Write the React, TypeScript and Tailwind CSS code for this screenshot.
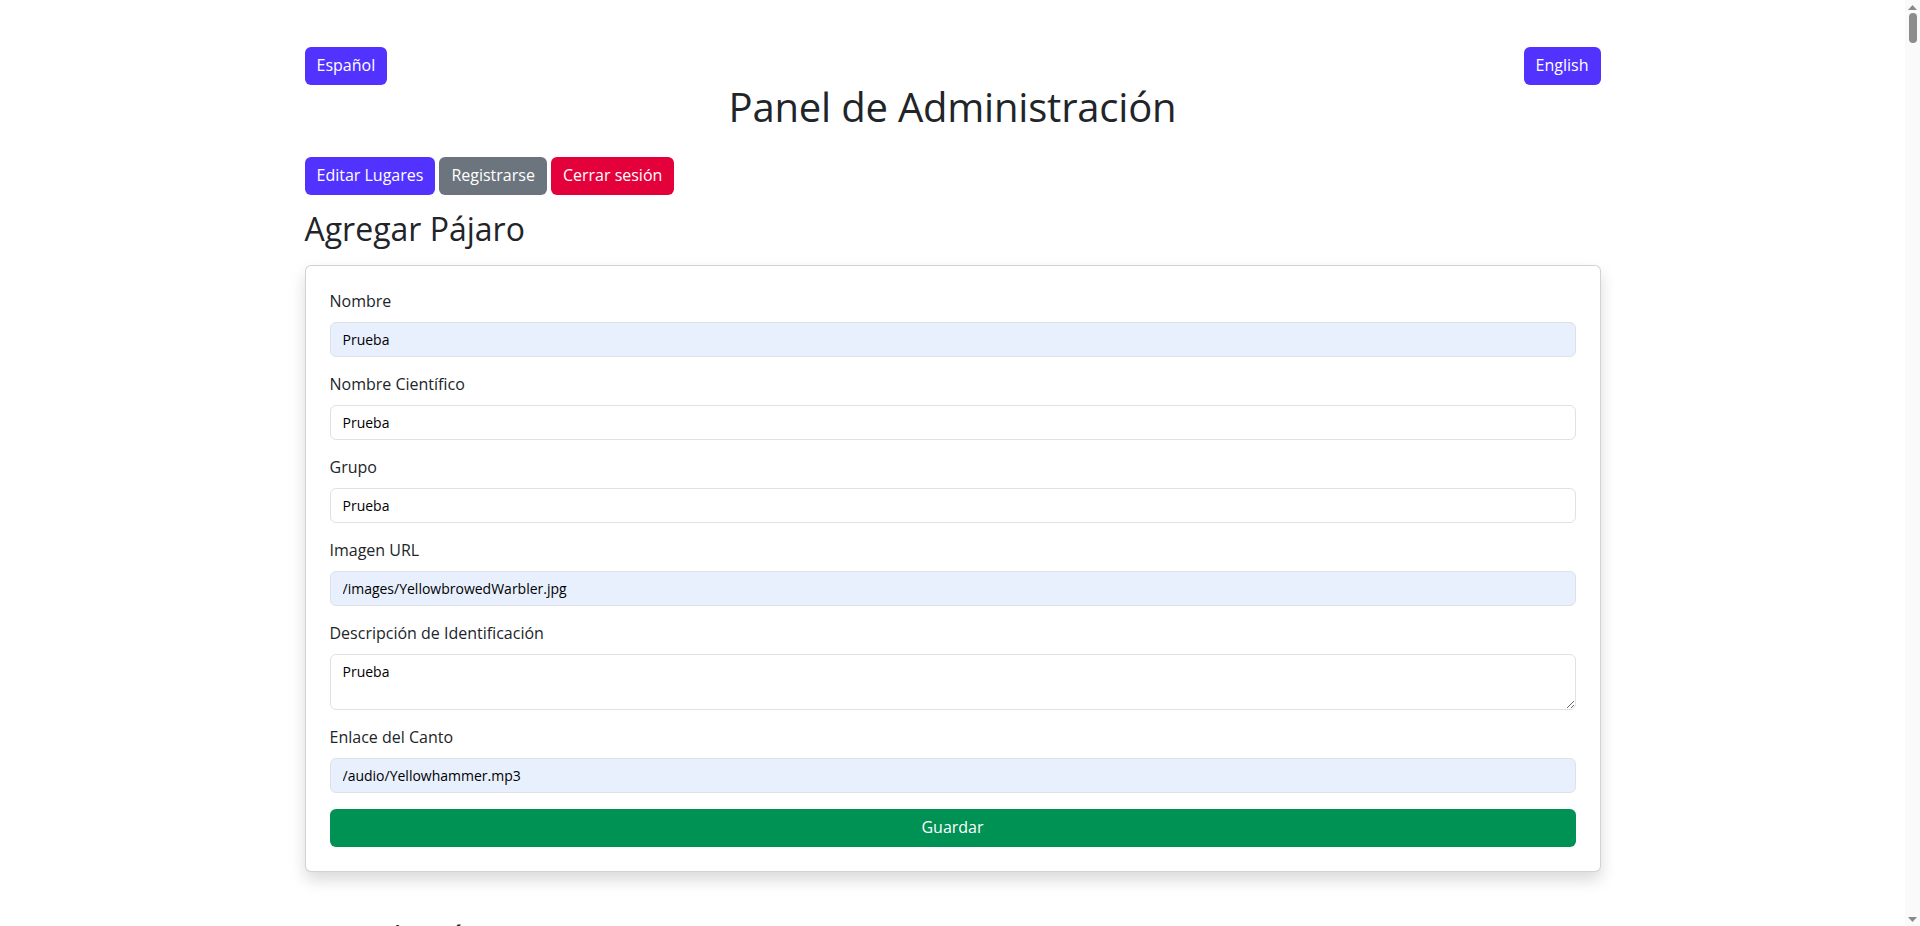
import React from "react";

const fieldsTop = [
  { label: "Nombre", value: "Prueba", autofill: true },
  { label: "Nombre Científico", value: "Prueba", autofill: false },
  { label: "Grupo", value: "Prueba", autofill: false },
  { label: "Imagen URL", value: "/images/YellowbrowedWarbler.jpg", autofill: true },
];

function Field({ label, value, autofill }: { label: string; value: string; autofill: boolean }) {
  return (
    <div className="mb-4">
      <label className="block mb-[10px] text-[16px] leading-[22px] text-[#212529]">{label}</label>
      <input
        readOnly
        value={value}
        className={
          "block w-full h-[35px] px-3 py-[6px] text-[14px] leading-[21px] text-black border border-[#dee2e6] rounded-md outline-none " +
          (autofill ? "bg-[#e8f0fe]" : "bg-white")
        }
        style={{ fontFamily: "'Open Sans', sans-serif" }}
      />
    </div>
  );
}

function FakeScrollbar() {
  return (
    <div className="fixed top-0 right-0 h-screen w-[15px] bg-[#fafafa] flex flex-col items-center">
      <svg width="9" height="5" viewBox="0 0 9 5" className="mt-[5px]">
        <polygon points="4.5,0 9,5 0,5" fill="#8a8a8a" />
      </svg>
      <div className="mt-[3px] w-[8px] h-[30px] rounded-full bg-[#8c8c8c]" />
      <div className="flex-1" />
      <svg width="9" height="5" viewBox="0 0 9 5" className="mb-[4px]">
        <polygon points="0,0 9,0 4.5,5" fill="#8a8a8a" />
      </svg>
    </div>
  );
}

const btn = "h-[38px] px-3 pb-[2px] rounded-md text-white text-[16px] leading-[24px]";

export default function App() {
  return (
    <div className="min-h-screen bg-white text-[#212529]" style={{ fontFamily: "'Open Sans', 'Noto Sans', sans-serif" }}>
      <div className="mr-[15px]">
        <div className="max-w-[1320px] mx-auto px-3 pt-[47px] pb-16">
          <div className="flex justify-between">
            <button className={btn + " bg-[#5232ff]"}>Español</button>
            <button className={btn + " bg-[#5232ff]"}>English</button>
          </div>
          <h1 className="text-center text-[40px] leading-[44px] font-normal mb-[28px] tracking-[-0.2px]">Panel de Administración</h1>
          <div className="flex gap-[4px]">
            <button className={btn + " bg-[#5232ff]"}>Editar Lugares</button>
            <button className={btn + " bg-[#6c757d]"}>Registrarse</button>
            <button className={btn + " bg-[#e4003a]"}>Cerrar sesión</button>
          </div>
          <h2 className="text-[32px] leading-[38.4px] font-normal mt-[15px] mb-[17px]">Agregar Pájaro</h2>
          <div className="border border-black/[0.175] rounded-md shadow-[0_8px_16px_rgba(0,0,0,0.15)] p-6 bg-white">
            {fieldsTop.map((f) => (
              <Field key={f.label} {...f} />
            ))}
            <div className="mb-4">
              <label className="block mb-[10px] text-[16px] leading-[22px]">Descripción de Identificación</label>
              <textarea
                readOnly
                rows={2}
                value="Prueba"
                className="block w-full h-[56px] px-3 py-[6px] text-[14px] leading-[21px] text-black border border-[#dee2e6] rounded-md outline-none bg-white"
                style={{ fontFamily: "'Open Sans', sans-serif" }}
              />
            </div>
            <Field label="Enlace del Canto" value="/audio/Yellowhammer.mp3" autofill={true} />
            <button className="w-full h-[38px] pb-[2px] rounded-md bg-[#009155] text-white text-[16px] leading-[24px]">Guardar</button>
          </div>
          <h2 className="text-[32px] leading-[38.4px] font-normal mt-[47px] mb-4">Lista de Pájaros</h2>
          <div className="flex flex-col gap-2">
            {["Prueba", "Yellowhammer", "Yellow-browed Warbler"].map((n) => (
              <div key={n} className="flex justify-between items-center border-b border-[#dee2e6] py-2">
                <span>{n}</span>
                <div className="flex gap-1">
                  <button className="h-[38px] px-3 rounded-md bg-[#5232ff] text-white">Editar</button>
                  <button className="h-[38px] px-3 rounded-md bg-[#e4003a] text-white">Eliminar</button>
                </div>
              </div>
            ))}
          </div>
        </div>
      </div>
      <FakeScrollbar />
    </div>
  );
}
